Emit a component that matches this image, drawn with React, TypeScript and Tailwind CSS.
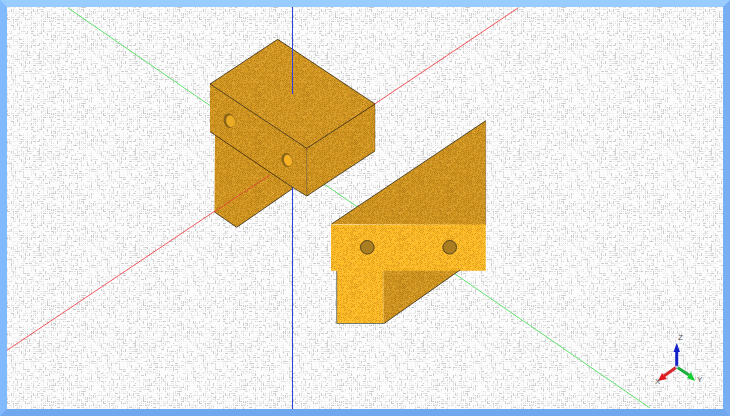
const W = 716;
const H = 402;

function makeRnd(seed: number) {
  let s = seed;
  return () => {
    s = (s * 16807) % 2147483647;
    return s / 2147483647;
  };
}

function paperTile(size: number) {
  const rnd = makeRnd(4711);
  const cells: { x: number; y: number; w: number; h: number; c: string }[] = [];
  for (let y = 0; y < size; y += 2) {
    for (let x = 0; x < size; x += 2) {
      const r = rnd();
      const c = rnd() < 0.25 ? "#cdcdcd" : rnd() < 0.6 ? "#e0e0e0" : "#eeeeee";
      if (r < 0.2) cells.push({ x, y, w: 3, h: 1, c });
      else if (r < 0.4) cells.push({ x, y, w: 1, h: 3, c });
      else if (r < 0.55) cells.push({ x, y, w: 1, h: 1, c });
    }
  }
  return cells;
}

function metalTile(size: number) {
  const rnd = makeRnd(911);
  const cells: { x: number; y: number; o: number; c: string }[] = [];
  for (let y = 0; y < size; y++) {
    for (let x = 0; x < size; x++) {
      if ((x + y) % 2 === 0 && rnd() < 0.8) {
        const dark = rnd() < 0.72;
        cells.push({ x, y, o: 0.08 + rnd() * 0.2, c: dark ? "#4a2e00" : "#ffdc80" });
      }
    }
  }
  return cells;
}

const paperCells = paperTile(96);
const metalCells = metalTile(48);

const pts = (list: number[][]) => list.map(([x, y]) => `${x - 7},${y - 7}`).join(" ");

const brown = "#d29620";
const bright = "#ffbb26";

export default function App() {
  return (
    <div className="w-[730px] h-[416px] flex box-border border-[7px] border-t-[#99ccff] border-l-[#82baff] border-r-[#78aef2] border-b-[#6fa8ee] bg-white overflow-hidden">
      <svg width={W} height={H} viewBox={`0 0 ${W} ${H}`} className="block" shapeRendering="crispEdges">
        <defs>
          <pattern id="paper" width="96" height="96" patternUnits="userSpaceOnUse">
            {paperCells.map((c, i) => (
              <rect key={i} x={c.x} y={c.y} width={c.w} height={c.h} fill={c.c} />
            ))}
          </pattern>
          <pattern id="metal" width="48" height="48" patternUnits="userSpaceOnUse">
            {metalCells.map((c, i) => (
              <rect key={i} x={c.x} y={c.y} width="1" height="1" fill={c.c} opacity={c.o} />
            ))}
          </pattern>
        </defs>
        <rect width={W} height={H} fill="#fcfcfc" />
        <rect width={W} height={H} fill="url(#paper)" />

        <g shapeRendering="auto" strokeWidth="1">
          <line x1="518" y1="8" x2="0" y2="355" transform="translate(-7,-7)" stroke="#f0555c" />
          <line x1="68" y1="8" x2="650" y2="408" transform="translate(-7,-7)" stroke="#62e070" />
        </g>
        <rect x="285" y="0" width="1" height={H} fill="#3040e0" />

        <g shapeRendering="auto" stroke="none">
          {[
            { p: [[215, 131], [292, 187], [292, 189], [236.7, 227.3], [214.5, 212]], f: brown },
            { p: [[210, 84], [306.7, 148.3], [306.7, 196], [291.7, 186.5], [210, 131.7]], f: brown },
            { p: [[306.7, 148.3], [375, 104], [375, 151], [306.7, 196]], f: brown },
            { p: [[277.7, 39.3], [375, 104], [306.7, 148.3], [210, 84]], f: "#d49822" },
            { p: [[331.5, 224], [485.7, 120.7], [485.7, 225]], f: brown },
            { p: [[383.3, 270], [460, 270], [384, 323.5], [383.3, 323.5]], f: brown },
            { p: [[336.7, 270], [383.3, 270], [383.3, 323.5], [336.7, 323.5]], f: bright },
            { p: [[331, 224.5], [485.7, 224.5], [485.7, 270.7], [331, 270.7]], f: bright },
          ].map((s, i) => (
            <g key={i}>
              <polygon points={pts(s.p)} fill={s.f} />
              <polygon points={pts(s.p)} fill="url(#metal)" />
            </g>
          ))}

          <g fill="none" stroke="#1c1606" strokeWidth="0.7">
            <polyline points={pts([[210, 84], [277.7, 39.3], [375, 104], [306.7, 148.3], [210, 84]])} />
            <polyline points={pts([[306.7, 196], [375, 151]])} />
            <polyline points={pts([[306.7, 196], [292, 187]])} />
            <polyline points={pts([[306.7, 148.3], [306.7, 196]])} strokeOpacity="0.55" />
            <polyline points={pts([[375, 104], [375, 151]])} strokeOpacity="0.35" />
            <polyline points={pts([[210, 131.7], [292, 187]])} />
            <polyline points={pts([[214.5, 212], [236.7, 227.3], [292, 189]])} />
            <polyline points={pts([[331.5, 224], [485.7, 120.7]])} />
            <polyline points={pts([[485.7, 120.7], [485.7, 225]])} strokeOpacity="0.4" />
            <polyline points={pts([[384, 323.5], [460, 270]])} />
            <polyline points={pts([[336.7, 271], [336.7, 323.5], [384, 323.5]])} stroke="#35505f" />
          </g>

          {/* holes in the upper block */}
          <ellipse cx={222.3} cy={113.7} rx="5.8" ry="7.3" fill="#8a6418" transform="rotate(-14 222.3 113.7)" />
          <ellipse cx={223.6} cy={114.2} rx="4.4" ry="6" fill="#ebaa24" transform="rotate(-14 223.6 114.2)" />
          <ellipse cx={280} cy={153} rx="5.4" ry="7.2" fill="#8a6418" transform="rotate(-14 280 153)" />
          <ellipse cx={281} cy={153.4} rx="4" ry="5.8" fill="#f5b024" transform="rotate(-14 281 153.4)" />

          {/* holes in the lower block */}
          <circle cx={360.3} cy={240.3} r="6.8" fill="#ab7e22" stroke="#54451c" strokeWidth="1" />
          <circle cx={442.7} cy={240.3} r="6.8" fill="#ab7e22" stroke="#54451c" strokeWidth="1" />
        </g>

        {/* axis pieces seen in front of the parts */}
        <g shapeRendering="auto">
          <rect x="285" y="0" width="1" height="87" fill="#3040e0" />
          <line x1="207" y1="205" x2="263" y2="168" stroke="#e8303a" strokeDasharray="2 1" />
        </g>

        {/* orientation triad */}
        <g shapeRendering="auto">
          <line x1="669.7" y1="359.7" x2="669.7" y2="342" stroke="#1420c8" strokeWidth="3" />
          <polygon points="669.7,336,666.5,345,673,345" fill="#1420c8" />
          <line x1="669.7" y1="360" x2="657" y2="369" stroke="#d8262c" strokeWidth="3" />
          <polygon points="651,374,655,366,660,372" fill="#e01820" />
          <line x1="669.7" y1="360" x2="682" y2="368" stroke="#1cae3c" strokeWidth="3" />
          <polygon points="688,374,680,371,684,365" fill="#10d030" />
          <circle cx="669.7" cy="360" r="1.6" fill="#b8c0d8" />
          <g fontFamily="'Liberation Sans', sans-serif" fontSize="8" fill="#555">
            <text x="671" y="333">Z</text>
            <text x="690" y="375">Y</text>
            <text x="648" y="377">X</text>
          </g>
        </g>
      </svg>
    </div>
  );
}
